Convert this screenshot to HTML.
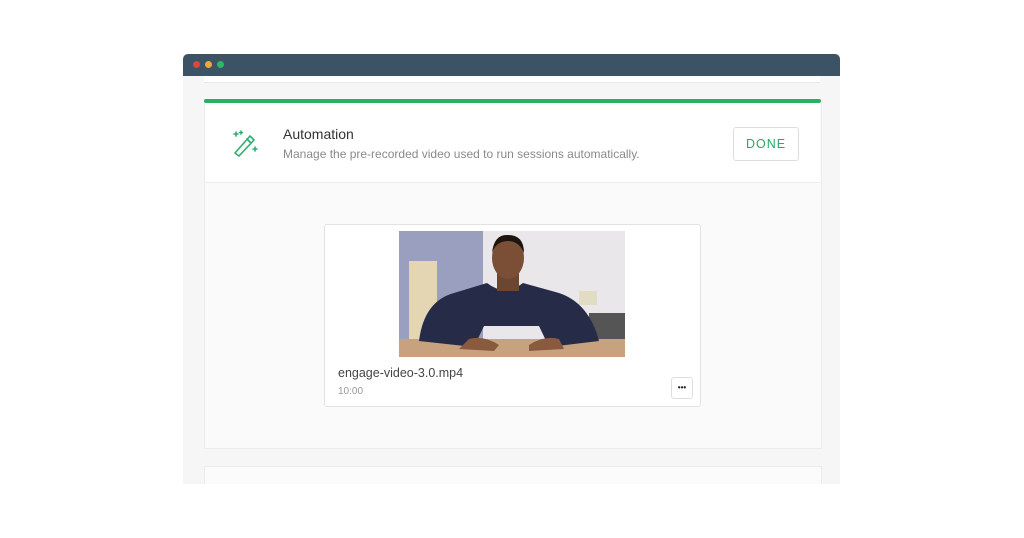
<!DOCTYPE html>
<html><head><style>
body{margin:0;width:1024px;height:538px;background:#fff;position:relative;overflow:hidden;font-family:"Liberation Sans",sans-serif}
.a{position:absolute}
</style></head><body>
<div class="a" style="left:183px;top:54px;width:657px;height:430px;background:#f6f6f6"></div>
<div class="a" style="left:183px;top:54px;width:657px;height:22px;background:#3c5365;border-radius:5px 5px 0 0"></div>
<div class="a" style="left:193px;top:61px;width:7px;height:7px;border-radius:50%;background:#e0443a"></div>
<div class="a" style="left:205px;top:61px;width:7px;height:7px;border-radius:50%;background:#e8a83a"></div>
<div class="a" style="left:217px;top:61px;width:7px;height:7px;border-radius:50%;background:#2cb862"></div>
<div class="a" style="left:204px;top:76px;width:616px;height:6px;background:#fff;border-bottom:1px solid #e8e8e8"></div>
<div class="a" style="left:204px;top:99px;width:616px;height:349px;background:#fafafa;border:1px solid #ececec;border-top:none"></div>
<div class="a" style="left:204px;top:99px;width:617px;height:4px;background:#27b066;border-radius:2px"></div>
<div class="a" style="left:205px;top:103px;width:615px;height:79px;background:#fff;border-bottom:1px solid #ececec"></div>
<svg class="a" style="left:230px;top:128px" width="30" height="30" viewBox="0 0 30 30" fill="none" stroke="#2fae6e" stroke-width="1.6" stroke-linecap="round" stroke-linejoin="round">
<path d="M5 25 L20 8 L24 12 L9 28 Z M17 11 L21 15"/>
<path d="M4 6h4M6 4v4M11 3v3M9.5 4.5h3M23 21h4M25 19v4"/>
</svg>
<div class="a" style="left:283px;top:126px;font-size:14px;color:#333">Automation</div>
<div class="a" style="left:283px;top:147px;font-size:12px;color:#8a8a8a">Manage the pre-recorded video used to run sessions automatically.</div>
<div class="a" style="left:733px;top:127px;width:64px;height:32px;border:1px solid #ddd;border-radius:3px;background:#fff;color:#2aa866;font-size:12.5px;letter-spacing:1px;text-align:center;line-height:32px">DONE</div>
<div class="a" style="left:324px;top:224px;width:375px;height:181px;background:#fff;border:1px solid #e2e2e2;border-radius:3px"></div>
<svg class="a" style="left:399px;top:231px" width="226" height="126" viewBox="0 0 226 126">
<rect width="226" height="126" fill="#e9e7ea"/>
<rect width="84" height="115" fill="#9a9fbf"/>
<rect x="10" y="30" width="28" height="80" fill="#e4d6b2"/>
<rect x="180" y="60" width="18" height="14" fill="#e3dcc5"/>
<rect x="190" y="82" width="36" height="34" fill="#555"/>
<rect y="108" width="226" height="18" fill="#c8a27e"/>
<path d="M20 110 Q25 70 55 62 L88 52 Q106 66 124 52 L160 62 Q190 72 200 110 L150 116 L140 95 L85 95 L75 116 Z" fill="#262b48"/>
<path d="M70 108 Q85 104 100 114 L95 120 L60 118 Z M130 114 Q145 104 160 108 L165 118 L130 120 Z" fill="#8a5a3e"/>
<rect x="98" y="40" width="22" height="20" fill="#6b4630"/>
<ellipse cx="109" cy="27" rx="16" ry="21" fill="#7a4f36"/>
<path d="M93 22 Q95 3 109 4 Q125 4 125 22 Q120 10 109 10 Q97 10 93 22Z" fill="#1d1410"/>
</svg>
<div class="a" style="left:338px;top:366px;font-size:12.5px;color:#444">engage-video-3.0.mp4</div>
<div class="a" style="left:338px;top:386px;font-size:10px;color:#999">10:00</div>
<div class="a" style="left:671px;top:377px;width:20px;height:20px;border:1px solid #ddd;border-radius:3px;background:#fff;font-size:8px;line-height:19px;text-align:center;color:#222;font-weight:bold">•••</div>
<div class="a" style="left:204px;top:466px;width:616px;height:20px;background:#fbfbfb;border:1px solid #ececec"></div>
<div class="a" style="left:0;top:484px;width:1024px;height:54px;background:#fff"></div>
</body></html>
